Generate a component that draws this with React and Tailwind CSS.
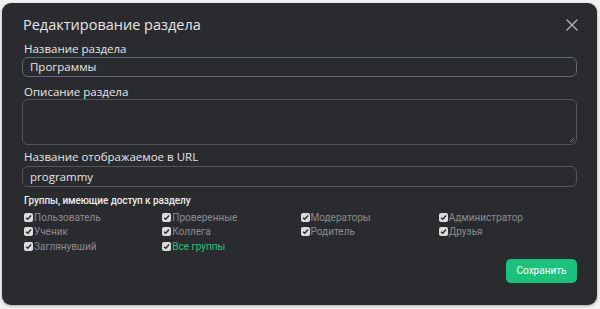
import { X } from 'lucide-react'

const groups = [
  ['Пользователь', 'Проверенные', 'Модераторы', 'Администратор'],
  ['Ученик', 'Коллега', 'Родитель', 'Друзья'],
  ['Заглянувший', 'Все группы'],
]

const narrow = { fontFamily: 'Roboto, "Liberation Sans", sans-serif' }

function Check({ label, accent }) {
  return (
    <label className="flex items-center gap-[1px] h-[14.5px]">
      <span className="w-[9px] h-[9px] rounded-[2px] bg-[#dcdcdc] flex items-center justify-center">
        <svg width="7" height="7" viewBox="0 0 10 10">
          <path d="M1.5 5.2 L4 7.6 L8.6 2.2" fill="none" stroke="#2a2b2f" strokeWidth="2" />
        </svg>
      </span>
      <span className={accent ? 'text-[#1fc37a]' : 'text-[#8b8c90]'}>{label}</span>
    </label>
  )
}

export default function App() {
  return (
    <div className="w-[600px] h-[309px] bg-[#f1f1f1] pt-[3px] pl-[2px]" style={{ fontFamily: '"Open Sans", "Noto Sans", sans-serif' }}>
      <div className="w-[595px] h-[302px] rounded-[9px] bg-[#2a2b2f] px-[20px] pt-[10px] text-[#e6e6e6] shadow-[0_1px_3px_rgba(0,0,0,0.3)]">
        <div className="flex items-center justify-between h-[24px]">
          <h2 className="text-[14.5px] pl-[1px]">Редактирование раздела</h2>
          <X size={20} strokeWidth={1.5} className="text-[#b5b6b9] mr-[-5px]" />
        </div>

        <div className="mt-[4px] text-[11.5px] leading-[15px] pl-[2px]">Название раздела</div>
        <div className="mt-[1px] h-[20px] rounded-[6px] border border-[#5d6a85] flex items-center px-[7px] text-[11.5px]">Программы</div>

        <div className="mt-[7px] text-[11.5px] leading-[15px] pl-[2px]">Описание раздела</div>
        <div className="mt-0 h-[46px] rounded-[6px] border border-[#55565b] relative">
          <svg className="absolute right-[1px] bottom-[1px]" width="6" height="6" viewBox="0 0 6 6">
            <path d="M5 1 L1 5 M5 3.5 L3.5 5" stroke="#8a8b8f" strokeWidth="0.8" />
          </svg>
        </div>

        <div className="mt-[4px] text-[11.5px] leading-[15px] pl-[2px]">Название отображаемое в URL</div>
        <div className="mt-[2px] h-[21px] rounded-[6px] border border-[#55565b] flex items-center px-[7px] text-[11.5px]">programmy</div>

        <div className="mt-[7px] text-[10px] leading-[14px] pl-[2px] font-medium tracking-[-0.1px] text-[#ececec]" style={narrow}>Группы, имеющие доступ к разделу</div>
        <div className="mt-[2px] grid grid-cols-4 text-[10px] pl-[2px]" style={narrow}>
          {groups.flatMap(row =>
            [0, 1, 2, 3].map(i =>
              row[i] ? <Check key={row[i]} label={row[i]} accent={row[i] === 'Все группы'} /> : <div key={row[0] + i} />
            )
          )}
        </div>

        <div className="flex justify-end mt-[5px]">
          <button className="w-[71px] h-[24px] rounded-[5px] bg-[#1cc27b] text-white text-[10px]" style={narrow}>Сохранить</button>
        </div>
      </div>
    </div>
  )
}
